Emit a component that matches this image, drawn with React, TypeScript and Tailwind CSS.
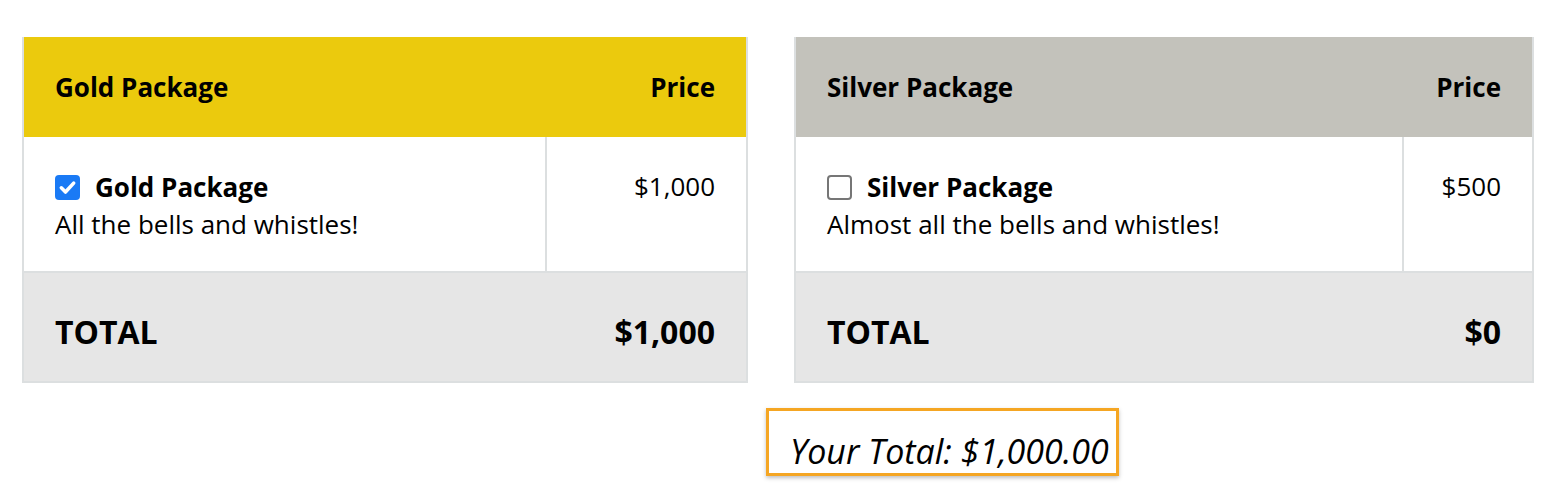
import React from "react";

const font = { fontFamily: "'Open Sans', 'Noto Sans', sans-serif" };

function Check({ checked }: { checked: boolean }) {
  if (checked) {
    return (
      <span className="inline-flex w-[25px] h-[25px] shrink-0 items-center justify-center rounded-[4px] bg-[#1a7af5]">
        <svg width="19" height="19" viewBox="0 0 16 16" fill="none">
          <path d="M2.8 8.3 L6.3 11.8 L13.2 4.3" stroke="white" strokeWidth="3" strokeLinecap="round" strokeLinejoin="round" />
        </svg>
      </span>
    );
  }
  return <span className="inline-block w-[25px] h-[25px] shrink-0 rounded-[4px] border-2 border-[#767676] bg-white" />;
}

function PkgTable({
  title,
  desc,
  price,
  total,
  checked,
  headerBg,
  width,
  priceW,
}: {
  title: string;
  desc: string;
  price: string;
  total: string;
  checked: boolean;
  headerBg: string;
  width: string;
  priceW: string;
}) {
  return (
    <div className={`${width} border-2 border-t-0 border-[#dcdfe0] text-black`}>
      <div className={`${headerBg} h-[100px] flex items-center justify-between px-[31px] text-[26px] leading-[36px] font-bold`}>
        <span>{title}</span>
        <span>Price</span>
      </div>
      <div className="flex h-[134px] bg-white">
        <div className="flex-1 px-[31px] pt-8 text-[26px] leading-[37px]">
          <div className="flex items-center gap-[15px]">
            <Check checked={checked} />
            <span className="font-bold">{title}</span>
          </div>
          <div>{desc}</div>
        </div>
        <div className={`${priceW} border-l-2 border-[#dcdfe0] px-[31px] pt-[31px] text-right text-[26px] leading-[36px]`}>
          {price}
        </div>
      </div>
      <div className="h-[110px] border-t-2 border-[#dcdfe0] bg-[#e6e6e6] flex items-start justify-between px-[31px] pt-[36px] text-[32px] leading-[46px] font-bold">
        <span>TOTAL</span>
        <span>{total}</span>
      </div>
    </div>
  );
}

export default function App() {
  return (
    <div className="w-[1558px] h-[492px] bg-white overflow-hidden" style={font}>
      <div className="flex gap-[46px] pl-[22px] pt-[37px]">
        <PkgTable
          title="Gold Package"
          desc="All the bells and whistles!"
          price="$1,000"
          total="$1,000"
          checked={true}
          headerBg="bg-[#ebca0d]"
          width="w-[726px]"
          priceW="w-[201px]"
        />
        <PkgTable
          title="Silver Package"
          desc="Almost all the bells and whistles!"
          price="$500"
          total="$0"
          checked={false}
          headerBg="bg-[#c3c2bb]"
          width="w-[740px]"
          priceW="w-[130px]"
        />
      </div>
      <div className="ml-[766px] mt-[25px] w-[353px] h-[68px] border-[3px] border-[#f5a623] bg-white shadow-[0_2px_4px_rgba(0,0,0,0.25)] pl-[21px] pt-[20px]">
        <div className="italic text-[34px] leading-[40px] text-black whitespace-nowrap">Your Total: $1,000.00</div>
      </div>
    </div>
  );
}
